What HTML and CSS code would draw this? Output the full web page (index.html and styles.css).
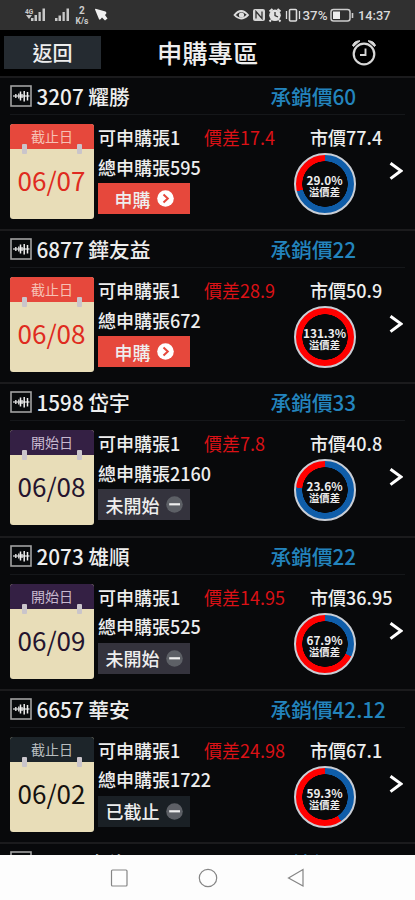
FILE: index.html
```html
<!DOCTYPE html>
<html lang="zh-Hant">
<head>
<meta charset="utf-8">
<title>申購專區</title>
<link rel="stylesheet" href="styles.css">
</head>
<body>
<svg class="defs" aria-hidden="true">
  <symbol id="wave" viewBox="0 0 22 22"><rect x="1" y="1" width="20" height="20" fill="#080a0c" stroke="#a2a2a2" stroke-width="1.600"/><path d="M3 11H19.500" stroke="#d4d4d4" stroke-width="1.300"/><path d="M5.800 9v4M8.800 8.500v5M12 9v4" stroke="#d4d4d4" stroke-width="1.500"/><path d="M10.500 6.500v9M14.200 6v10.500M17.500 7v8.500" stroke="#efefef" stroke-width="1.500"/></symbol>
  <symbol id="chev" viewBox="0 0 14 18"><path d="M1.500 1.200L12 8.800L1.500 16.600" fill="none" stroke="#fff" stroke-width="3"/></symbol>
  <symbol id="go" viewBox="0 0 17 17"><circle cx="8.500" cy="8.500" r="8.300" fill="#fff"/><path d="M6.500 4.500L10.800 8.500L6.500 12.500" fill="none" stroke="#e6483c" stroke-width="2"/></symbol>
  <symbol id="minus" viewBox="0 0 17 17"><circle cx="8.500" cy="8.500" r="8.300" fill="#5d6066"/><path d="M3.200 8.300H14" stroke="#eee" stroke-width="2.200"/></symbol>
</svg>
<div class="phone">
  <header class="status">
    <svg width="415" height="30" viewBox="0 0 415 30">
      <g fill="#c8c8c8">
        <path d="M31 21v-3h2.500v3zM34.500 21v-6h2.500v6zM38.500 21V12h2.300v9zM42.500 21V8.500h2.500V21z"/>
        <path d="M55 21v-3h2.500v3zM58.500 21v-5.500h2.500V21zM62.500 21v-9h2.300v9zM66.500 21V8.500H69V21z"/>
        <path d="M26 15h6l-3 4z"/>
        <path fill="#f0f0f0" d="M95 9.500Q95 8.500 96.500 9L105.500 11.500Q107.500 13 105 15L107.500 18.500L105 20.500L102 17.500Q99.500 21.500 98.500 18z"/>
      </g>
      <g class="tiny"><text x="25" y="14" font-size="6.500">4G</text><text x="79" y="13.500" font-size="10">2</text><text x="75.500" y="24" font-size="8.500">K/s</text></g>
      <path d="M234.500 15Q241 7 248 15Q241 22 234.500 15z" fill="none" stroke="#ddd" stroke-width="1.800"/><circle cx="241.500" cy="15" r="2.600" fill="#ddd"/>
      <rect x="253" y="9" width="12" height="12" rx="2" fill="#d5d5d5"/><path d="M256 18.500V11.500L262 18.500V11.500" fill="none" stroke="#303030" stroke-width="1.300"/>
      <circle cx="275" cy="15.300" r="5.800" fill="#e2e2e2"/><path d="M269.500 11.500l3-2.500M280.500 11.500l-3-2.500M271 20l-1.500 1.500M279 20l1.500 1.500" stroke="#e2e2e2" stroke-width="2"/><path d="M275 12v3.500l3 1.500" fill="none" stroke="#333" stroke-width="1.300"/>
      <rect x="289.500" y="9.500" width="7" height="11.500" rx="1" fill="none" stroke="#ddd" stroke-width="1.600"/><path d="M286.500 11v8M299.500 11v8" stroke="#ddd" stroke-width="1.300"/>
      <text x="302.500" y="20" class="stat" textLength="25" lengthAdjust="spacingAndGlyphs">37%</text>
      <rect x="331" y="9.500" width="19" height="11.500" rx="2.500" fill="none" stroke="#ccc" stroke-width="1.500"/><rect x="333" y="11.500" width="7" height="7.500" fill="#eee"/><path d="M352.500 13v5" stroke="#ccc" stroke-width="1.600"/>
      <text x="358" y="20" class="stat" textLength="32.500" lengthAdjust="spacingAndGlyphs">14:37</text>
    </svg>
  </header>
  <nav class="bar">
    <div class="back">返回</div>
    <h1>申購專區</h1>
    <svg class="alarm" width="26" height="28" viewBox="0 0 26 28"><circle cx="13" cy="15" r="10.300" fill="none" stroke="#d8d8d8" stroke-width="2.200"/><path d="M14.500 9.500V16H9" fill="none" stroke="#d8d8d8" stroke-width="1.900"/><path d="M1.500 6.500Q3 1.800 9 1.800L2.500 7.500zM24.500 6.500Q23 1.800 17 1.800L23.500 7.500z" fill="#d8d8d8" stroke="#d8d8d8"/></svg>
  </nav>
  <main class="list">
    <section class="item red">
      <div class="head"><svg class="wave"><use href="#wave"/></svg><span class="name">3207 耀勝</span><span class="price">承銷價60</span></div>
      <div class="body">
        <div class="cal"><div class="cap">截止日</div><div class="date">06/07</div></div>
        <div class="info"><p>可申購張1</p><p>總申購張595</p><div class="btn">申購<svg><use href="#go"/></svg></div></div>
        <div class="diff">價差17.4</div>
        <div class="market"><p>市價77.4</p><div class="ring" style="--p:29%"><b>29.0%</b><i>溢價差</i></div></div>
        <svg class="chev"><use href="#chev"/></svg>
      </div>
    </section>
    <section class="item red">
      <div class="head"><svg class="wave"><use href="#wave"/></svg><span class="name">6877 鏵友益</span><span class="price">承銷價22</span></div>
      <div class="body">
        <div class="cal"><div class="cap">截止日</div><div class="date">06/08</div></div>
        <div class="info"><p>可申購張1</p><p>總申購張672</p><div class="btn">申購<svg><use href="#go"/></svg></div></div>
        <div class="diff">價差28.9</div>
        <div class="market"><p>市價50.9</p><div class="ring" style="--p:100%"><b>131.3%</b><i>溢價差</i></div></div>
        <svg class="chev"><use href="#chev"/></svg>
      </div>
    </section>
    <section class="item purple">
      <div class="head"><svg class="wave"><use href="#wave"/></svg><span class="name">1598 岱宇</span><span class="price">承銷價33</span></div>
      <div class="body">
        <div class="cal"><div class="cap">開始日</div><div class="date">06/08</div></div>
        <div class="info"><p>可申購張1</p><p>總申購張2160</p><div class="btn">未開始<svg><use href="#minus"/></svg></div></div>
        <div class="diff">價差7.8</div>
        <div class="market"><p>市價40.8</p><div class="ring" style="--p:23.6%"><b>23.6%</b><i>溢價差</i></div></div>
        <svg class="chev"><use href="#chev"/></svg>
      </div>
    </section>
    <section class="item purple">
      <div class="head"><svg class="wave"><use href="#wave"/></svg><span class="name">2073 雄順</span><span class="price">承銷價22</span></div>
      <div class="body">
        <div class="cal"><div class="cap">開始日</div><div class="date">06/09</div></div>
        <div class="info"><p>可申購張1</p><p>總申購張525</p><div class="btn">未開始<svg><use href="#minus"/></svg></div></div>
        <div class="diff">價差14.95</div>
        <div class="market"><p>市價36.95</p><div class="ring" style="--p:67.9%"><b>67.9%</b><i>溢價差</i></div></div>
        <svg class="chev"><use href="#chev"/></svg>
      </div>
    </section>
    <section class="item dark">
      <div class="head"><svg class="wave"><use href="#wave"/></svg><span class="name">6657 華安</span><span class="price">承銷價42.12</span></div>
      <div class="body">
        <div class="cal"><div class="cap">截止日</div><div class="date">06/02</div></div>
        <div class="info"><p>可申購張1</p><p>總申購張1722</p><div class="btn">已截止<svg><use href="#minus"/></svg></div></div>
        <div class="diff">價差24.98</div>
        <div class="market"><p>市價67.1</p><div class="ring" style="--p:59.3%"><b>59.3%</b><i>溢價差</i></div></div>
        <svg class="chev"><use href="#chev"/></svg>
      </div>
    </section>
    <section class="item dark last">
      <div class="head"><svg class="wave"><use href="#wave"/></svg><span class="name">2064 台海電</span><span class="price">承銷價</span></div>
    </section>
  </main>
  <footer class="keys">
    <svg width="415" height="45" viewBox="0 0 415 45" fill="none" stroke="#858585" stroke-width="1.200"><rect x="111.500" y="15" width="15.500" height="16" rx="1"/><circle cx="208" cy="23" r="8.700"/><path d="M288.500 23L303 14.500V31z"/></svg>
  </footer>
</div>
</body>
</html>
```
FILE: styles.css
```css
* { box-sizing: border-box; margin: 0; padding: 0; }
body { background: #000; font-family: "Noto Sans CJK TC", sans-serif; font-weight: 500; color: #eee; }
svg { display: block; flex: none; }
.defs { width: 0; height: 0; position: absolute; }
.phone { width: 415px; height: 900px; display: flex; flex-direction: column; overflow: hidden; }

.status { height: 30px; flex: none; background: #303030; }
.tiny { fill: #ccc; font-family: Roboto, sans-serif; font-weight: 700; }
.stat { fill: #dadada; font-family: Roboto, sans-serif; font-size: 13.5px; font-weight: 500; }

.bar { height: 46px; flex: none; display: flex; align-items: flex-start; padding: 6px 0 0 4px; background: #000; }
.back { width: 97px; height: 33px; background: #252b31; font-size: 20px; line-height: 33px; text-align: center; }
.bar h1 { width: 103px; margin-left: 56px; font-size: 25.3px; line-height: 33px; font-weight: 500; white-space: nowrap; }
.alarm { margin: 3px 0 0 91px; }

.list { height: 779px; flex: none; overflow: hidden; background: #08090b; }
.item { height: 153.2px; border-top: 2px solid #1b1b1d; white-space: nowrap; }
.head { height: 37px; margin: 0 10px; display: flex; align-items: center; border-bottom: 1px solid #15171a; }
.wave { width: 22px; height: 22px; }
.name { width: 234px; margin-left: 4.5px; font-size: 20.7px; line-height: 34px; }
.price { color: #2384bd; font-size: 20.7px; line-height: 34px; }
.last .name, .last .price { padding-top: 3px; }
.body { display: flex; padding: 9px 0 0 9.5px; }

.cal { width: 84px; height: 95px; flex: none; position: relative; border-radius: 3px; overflow: hidden; background: #e8ddb8; text-align: center; }
.cap { height: 25px; padding-left: 1px; font-size: 14px; line-height: 25px; font-weight: 400; background: var(--cap); color: var(--captext); }
.date { font-size: 26px; line-height: 62px; font-weight: 400; color: var(--date); }
.cal::before, .cal::after { content: ""; position: absolute; top: 20px; width: 5px; height: 10px; border-radius: 1px; background: #cac5cb; }
.cal::before { left: 12px; }
.cal::after { right: 12px; }

.info { width: 106px; margin-left: 4.5px; flex: none; }
.info p { height: 29.5px; font-size: 18px; line-height: 26px; }
.btn { width: 92px; height: 31px; display: flex; align-items: center; justify-content: center; gap: 6px; background: var(--btn); font-size: 18px; line-height: 30px; }
.btn svg { width: 17px; height: 17px; }
.diff { width: 106px; flex: none; font-size: 18px; line-height: 26px; color: #db1116; font-weight: 400; }
.market { width: 80px; flex: none; font-size: 18px; line-height: 26px; }
.ring { width: 62px; height: 62px; margin: 3px 0 0 -16.5px; padding-top: 3px; border: 2px solid #c9ced6; border-radius: 50%; background: radial-gradient(circle, #08090b 22.5px, transparent 23px), conic-gradient(#0f5da9 calc(100% - var(--p)), #f00 0); display: flex; flex-direction: column; align-items: center; justify-content: center; }
.ring b { font-size: 11.8px; line-height: 13px; font-weight: 700; }
.ring i { font-size: 10.3px; line-height: 12px; font-style: normal; font-weight: 700; }
.chev { width: 14px; height: 18px; margin: 38px 0 0 -1px; }

.red { --cap: #e6483c; --captext: #f6c1b5; --date: #df2b20; --btn: #e6483c; }
.purple { --cap: #342044; --captext: #c7b9cf; --date: #24142e; --btn: #34333d; }
.dark { --cap: #1d252a; --captext: #b8bec0; --date: #15120f; --btn: #1a2025; }

.keys { height: 45px; flex: none; background: #fdfdfd; }
```
